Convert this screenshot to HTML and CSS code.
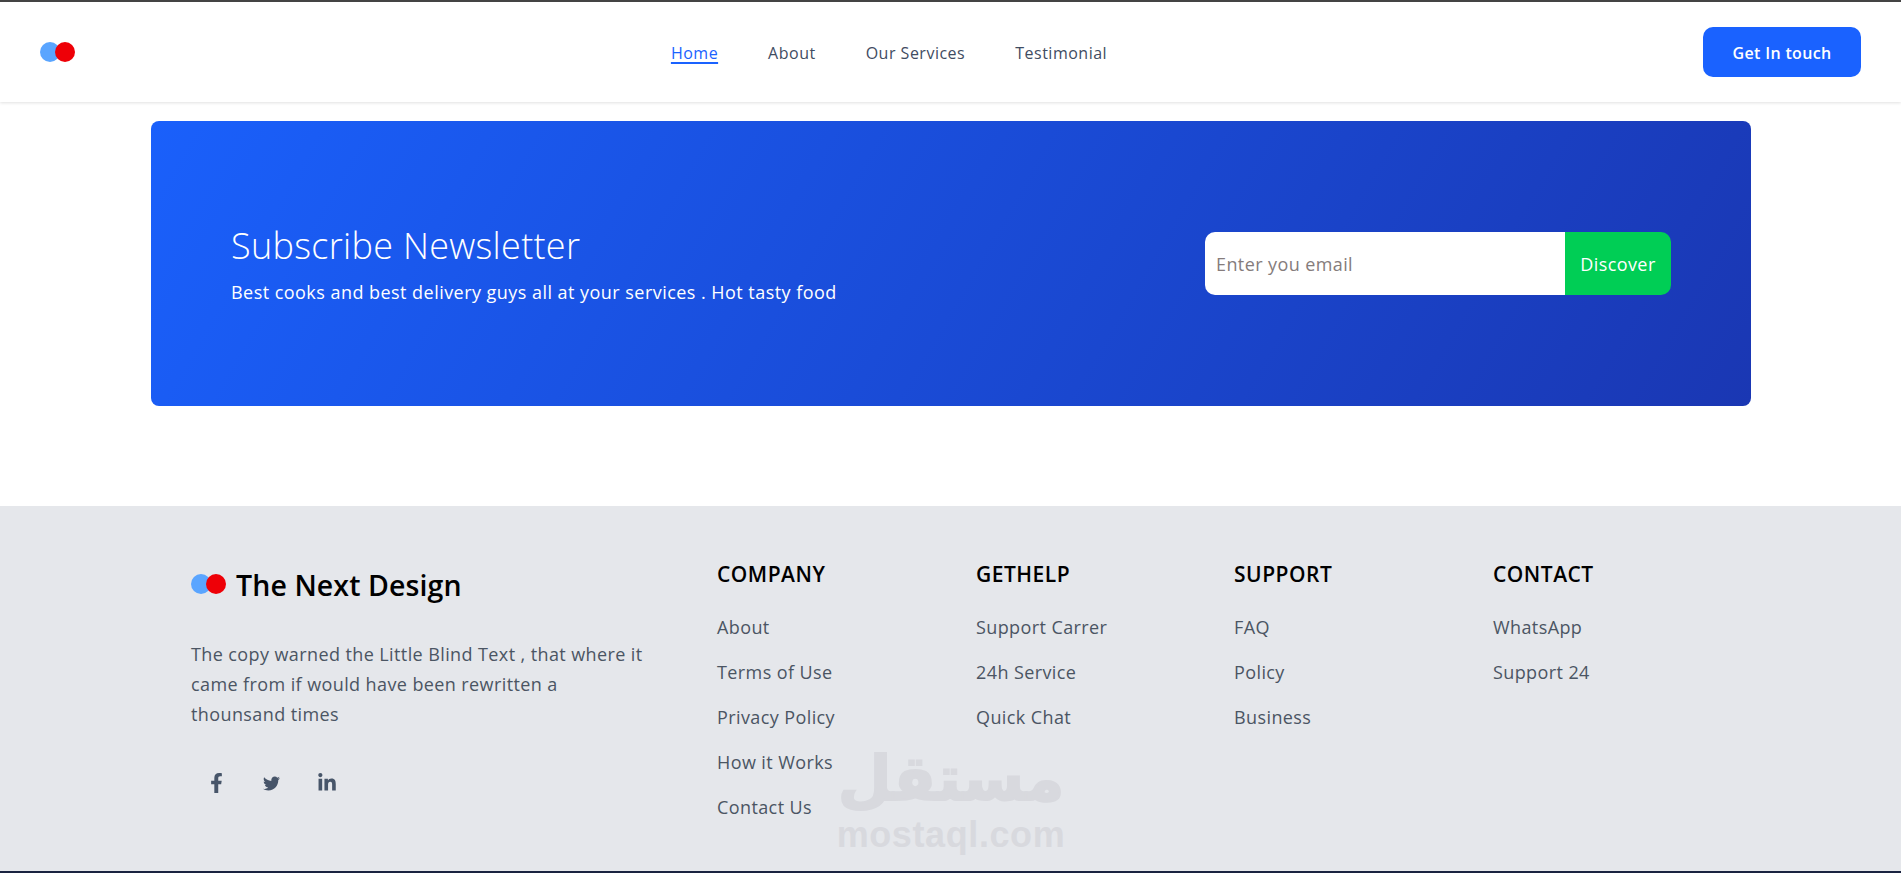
FILE: index.html
```html
<!DOCTYPE html>
<html lang="en">
<head>
<meta charset="utf-8">
<title>The Next Design</title>
<link rel="stylesheet" href="styles.css">
</head>
<body>
<header class="header">
  <a class="logo" href="#"><span class="dot dot-blue"></span><span class="dot dot-red"></span></a>
  <nav class="nav">
    <a class="nav-link active" href="#">Home</a>
    <a class="nav-link" href="#">About</a>
    <a class="nav-link" href="#">Our Services</a>
    <a class="nav-link" href="#">Testimonial</a>
  </nav>
  <a class="cta" href="#">Get In touch</a>
</header>
<main class="main">
  <section class="banner">
    <div class="banner-copy">
      <h2 class="banner-title">Subscribe Newsletter</h2>
      <p class="banner-text">Best cooks and best delivery guys all at your services . Hot tasty food</p>
    </div>
    <form class="subscribe">
      <input class="subscribe-input" type="text" placeholder="Enter you email">
      <button class="subscribe-btn" type="button">Discover</button>
    </form>
  </section>
</main>
<footer class="footer">
  <div class="footer-grid">
    <div class="brand">
      <div class="brand-head">
        <span class="logo"><span class="dot dot-blue"></span><span class="dot dot-red"></span></span>
        <span class="brand-name">The Next Design</span>
      </div>
      <p class="brand-text">The copy warned the Little Blind Text , that where it came from if would have been rewritten a thounsand times</p>
      <div class="social">
        <a class="social-link" href="#"><svg class="ico-f" viewBox="0 0 320 512"><path d="M279.14 288l14.22-92.66h-88.91v-60.13c0-25.35 12.42-50.06 52.24-50.06h40.42V6.26S260.43 0 225.36 0c-73.22 0-121.08 44.38-121.08 124.72v70.62H22.89V288h81.39v224h100.17V288z"/></svg></a>
        <a class="social-link" href="#"><svg class="ico-t" viewBox="0 0 512 512"><path d="M459.37 151.716c.325 4.548.325 9.097.325 13.645 0 138.72-105.583 298.558-298.558 298.558-59.452 0-114.68-17.219-161.137-47.106 8.447.974 16.568 1.299 25.34 1.299 49.055 0 94.213-16.568 130.274-44.832-46.132-.975-84.792-31.188-98.112-72.772 6.498.974 12.995 1.624 19.818 1.624 9.421 0 18.843-1.3 27.614-3.573-48.081-9.747-84.143-51.98-84.143-102.985v-1.299c13.969 7.797 30.214 12.67 47.431 13.319-28.264-18.843-46.781-51.005-46.781-87.391 0-19.492 5.197-37.36 14.294-52.954 51.655 63.675 129.3 105.258 216.365 109.807-1.624-7.797-2.599-15.918-2.599-24.04 0-57.828 46.782-104.934 104.934-104.934 30.213 0 57.502 12.67 76.67 33.137 23.715-4.548 46.456-13.32 66.599-25.34-7.798 24.366-24.366 44.833-46.132 57.827 21.117-2.273 41.584-8.122 60.426-16.243-14.292 20.791-32.161 39.308-52.628 54.253z"/></svg></a>
        <a class="social-link" href="#"><svg class="ico-l" viewBox="0 0 448 512"><path d="M100.28 448H7.4V148.9h92.88zM53.79 108.1C24.09 108.1 0 83.5 0 53.8a53.79 53.79 0 0 1 107.58 0c0 29.7-24.1 54.3-53.79 54.3zM447.9 448h-92.68V302.4c0-34.7-.7-79.2-48.29-79.2-48.29 0-55.69 37.7-55.69 76.7V448h-92.78V148.9h89.08v40.8h1.3c12.4-23.5 42.69-48.3 87.88-48.3 94 0 111.28 61.9 111.28 142.3V448z"/></svg></a>
      </div>
    </div>
    <div class="col">
      <h3 class="col-title">COMPANY</h3>
      <ul class="col-list">
        <li><a href="#">About</a></li>
        <li><a href="#">Terms of Use</a></li>
        <li><a href="#">Privacy Policy</a></li>
        <li><a href="#">How it Works</a></li>
        <li><a href="#">Contact Us</a></li>
      </ul>
    </div>
    <div class="col">
      <h3 class="col-title">GETHELP</h3>
      <ul class="col-list">
        <li><a href="#">Support Carrer</a></li>
        <li><a href="#">24h Service</a></li>
        <li><a href="#">Quick Chat</a></li>
      </ul>
    </div>
    <div class="col">
      <h3 class="col-title">SUPPORT</h3>
      <ul class="col-list">
        <li><a href="#">FAQ</a></li>
        <li><a href="#">Policy</a></li>
        <li><a href="#">Business</a></li>
      </ul>
    </div>
    <div class="col">
      <h3 class="col-title">CONTACT</h3>
      <ul class="col-list">
        <li><a href="#">WhatsApp</a></li>
        <li><a href="#">Support 24</a></li>
      </ul>
    </div>
  </div>
  <div class="watermark" aria-hidden="true">
    <div class="wm-ar" lang="ar" dir="rtl">مستقل</div>
    <div class="wm-en">mostaql.com</div>
  </div>
</footer>
</body>
</html>
```

FILE: styles.css
```css
* { box-sizing: border-box; }
html, body { margin: 0; padding: 0; }
body {
  height: 873px;
  overflow: hidden;
  background: #fff;
  border-top: 2px solid #444;
  font-family: "Open Sans", "Noto Sans", sans-serif;
  display: flex;
  flex-direction: column;
}
a { text-decoration: none; color: inherit; }

.header {
  height: 100px;
  flex: none;
  display: flex;
  align-items: center;
  justify-content: space-between;
  padding: 0 40px;
  background: #fff;
  box-shadow: 0 1px 3px rgba(0,0,0,.12);
  position: relative;
}
.header > .logo { margin-top: -1px; }
.logo { display: inline-flex; width: 35px; height: 20px; flex: none; }
.dot { width: 20px; height: 20px; border-radius: 50%; flex: none; }
.dot-blue { background: #5aa5ff; }
.dot-red { background: #ee0007; margin-left: -5px; }

.nav { display: flex; gap: 50px; padding-top: 2px; }
.nav-link { font-size: 16px; font-weight: 500; line-height: 24px; color: #3f4c62; letter-spacing: .5px; }
.nav-link.active { color: #1a62ff; text-decoration: underline; text-decoration-thickness: 2px; text-underline-offset: 3px; }
.cta {
  width: 158px;
  height: 50px;
  padding-top: 2px;
  display: flex;
  align-items: center;
  justify-content: center;
  border-radius: 10px;
  background: #1a62ff;
  color: #fff;
  font-size: 16px;
  font-weight: 600;
  letter-spacing: .35px;
}

.main { height: 404px; flex: none; padding: 19px 150px 0 151px; }
.banner {
  height: 285px;
  display: flex;
  align-items: center;
  justify-content: space-between;
  padding: 0 80px;
  border-radius: 8px;
  background: linear-gradient(120deg, #1a60fb 0%, #1a37b3 100%);
  color: #fff;
}
.banner-copy { margin-top: 2px; }
.banner-title { margin: 0; font-size: 36px; font-weight: 300; line-height: 44px; letter-spacing: .3px; }
.banner-text { margin: 11px 0 0; font-size: 18px; line-height: 26px; letter-spacing: .46px; }
.subscribe { display: flex; height: 63px; width: 466px; border-radius: 10px; overflow: hidden; }
.subscribe-input {
  flex: 1;
  min-width: 0;
  border: 0;
  outline: 0;
  padding: 0 11px;
  background: #fff;
  font: 400 18px "Open Sans", sans-serif;
  letter-spacing: .4px;
}
.subscribe-input::placeholder { color: #857c7c; opacity: 1; }
.subscribe-btn {
  width: 106px;
  padding: 0;
  border: 0;
  background: #00ce55;
  color: #fff;
  font: 400 18px "Open Sans", sans-serif;
  letter-spacing: .4px;
}

.footer {
  position: relative;
  flex: none;
  height: 365px;
  background: #e5e7eb;
  padding: 54px 0 0 191px;
}
.footer::after {
  content: "";
  position: absolute;
  left: 0; right: 0; bottom: -2px;
  height: 2px;
  background: #1a2340;
}
.footer-grid { display: grid; grid-template-columns: 526px 259px 258px 259px 258px; }
.brand-head { display: flex; align-items: center; gap: 10px; height: 36px; margin-top: 7px; }
.brand-name { font-size: 28.5px; font-weight: 600; line-height: 36px; color: #000; letter-spacing: .1px; }
.brand .logo { margin-top: -2px; }
.brand-text { margin: 36px 0 0; width: 454px; font-size: 18px; line-height: 30px; color: #4b5563; letter-spacing: .4px; }
.social { display: flex; margin: 34px 0 0 -2px; height: 40px; }
.social-link { width: 55px; display: flex; align-items: center; justify-content: center; }
.social-link svg { fill: #475569; display: block; }
.ico-f { width: 13px; height: 20px; }
.ico-t { width: 17px; height: 17px; }
.ico-l { width: 18px; height: 20px; }
.col-title { margin: 0; font-size: 21px; font-weight: 600; line-height: 28px; color: #000; letter-spacing: .5px; }
.col-list { list-style: none; margin: 26px 0 0; padding: 0; display: flex; flex-direction: column; gap: 18px; }
.col-list li { font-size: 18px; line-height: 27px; color: #4b5563; letter-spacing: .4px; }

.watermark { position: absolute; left: 836px; top: 237px; width: 230px; color: #d8d9de; text-align: center; }
.wm-ar { font-family: "DejaVu Sans", sans-serif; font-weight: 700; font-size: 62px; line-height: 72px; height: 72px; -webkit-text-stroke: 2px #d8d9de; }
.wm-en { font-family: "Liberation Sans", sans-serif; font-weight: 700; font-size: 36px; line-height: 40px; letter-spacing: .6px; }
```
